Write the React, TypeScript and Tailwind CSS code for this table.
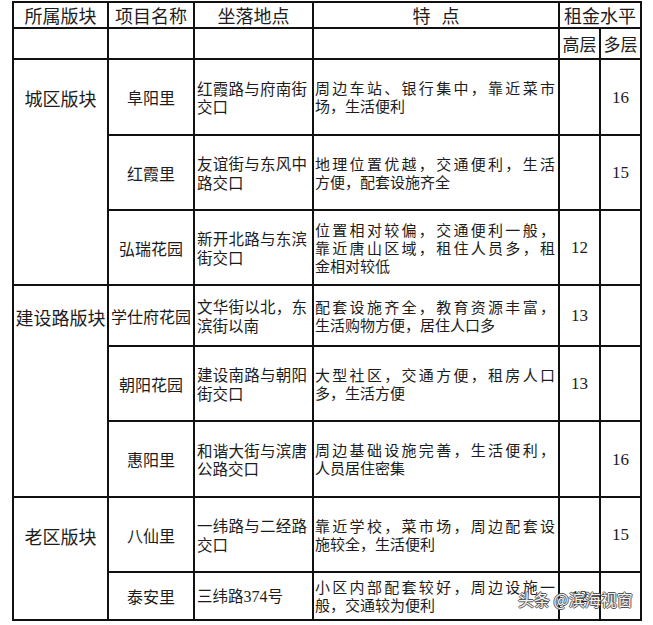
import React from "react";

type Row = {
  group?: string;
  groupEnd?: boolean;
  name: string;
  addr: React.ReactNode[];
  feat: string[];
  high?: string;
  multi?: string;
};

const serif = "font-['Liberation_Serif',serif]";

const rows: Row[] = [
  {
    group: "城区版块",
    name: "阜阳里",
    addr: ["红霞路与府南街", "交口"],
    feat: ["周边车站、银行集中，靠近菜市", "场，生活便利"],
    multi: "16",
  },
  {
    name: "红霞里",
    addr: ["友谊街与东风中", "路交口"],
    feat: ["地理位置优越，交通便利，生活", "方便，配套设施齐全"],
    multi: "15",
  },
  {
    name: "弘瑞花园",
    groupEnd: true,
    addr: ["新开北路与东滨", "街交口"],
    feat: ["位置相对较偏，交通便利一般，", "靠近唐山区域，租住人员多，租", "金相对较低"],
    high: "12",
  },
  {
    group: "建设路版块",
    name: "学仕府花园",
    addr: ["文华街以北，东", "滨街以南"],
    feat: ["配套设施齐全，教育资源丰富，", "生活购物方便，居住人口多"],
    high: "13",
  },
  {
    name: "朝阳花园",
    addr: ["建设南路与朝阳", "街交口"],
    feat: ["大型社区，交通方便，租房人口", "多，生活方便"],
    high: "13",
  },
  {
    name: "惠阳里",
    groupEnd: true,
    addr: ["和谐大街与滨唐", "公路交口"],
    feat: ["周边基础设施完善，生活便利，", "人员居住密集"],
    multi: "16",
  },
  {
    group: "老区版块",
    name: "八仙里",
    addr: ["一纬路与二经路", "交口"],
    feat: ["靠近学校，菜市场，周边配套设", "施较全，生活便利"],
    multi: "15",
  },
  {
    name: "泰安里",
    groupEnd: true,
    addr: [
      <>
        三纬路<span className={`${serif} text-[16px]`}>374</span>号
      </>,
    ],
    feat: ["小区内部配套较好，周边设施一", "般，交通较为便利"],
    high: "12",
  },
];

const cell = "border-r-2 border-b-2 border-[#111]";

const Lines = ({ lines }: { lines: React.ReactNode[] }) => (
  <div className="w-full">
    {lines.map((l, i) => (
      <div
        key={i}
        className={i < lines.length - 1 ? "text-justify [text-align-last:justify]" : ""}
      >
        {l}
      </div>
    ))}
  </div>
);

export default function App() {
  return (
    <div className="relative w-[653px] h-[625px] overflow-hidden bg-white text-[#1c1c1c] font-['Noto_Sans_CJK_SC','Noto_Sans',sans-serif]">
      <div className="ml-[12px] mt-[1px] w-fit grid grid-cols-[95px_86px_119px_246px_41px_41px] grid-rows-[26px_31px_76px_75px_75px_61px_75px_76px_75px_48px] border-l-2 border-t-2 border-[#111]">
        {/* header */}
        <div className={`${cell} flex items-center justify-center text-[18px] leading-none`}>所属版块</div>
        <div className={`${cell} flex items-center justify-center text-[18px] leading-none`}>项目名称</div>
        <div className={`${cell} flex items-center justify-center text-[18px] leading-none`}>坐落地点</div>
        <div className={`${cell} flex items-center justify-center gap-[11px] text-[18px] leading-none`}>
          <span>特</span>
          <span>点</span>
        </div>
        <div className={`${cell} col-span-2 flex items-center justify-center text-[18px] leading-none`}>租金水平</div>

        <div className={cell} />
        <div className={cell} />
        <div className={cell} />
        <div className={cell} />
        <div className={`${cell} flex items-center justify-center text-[17px] leading-none`}>高层</div>
        <div className={`${cell} flex items-center justify-center text-[17px] leading-none`}>多层</div>

        {rows.map((r, i) => (
          <React.Fragment key={i}>
            <div
              className={`border-r-2 border-[#111] ${r.groupEnd ? "border-b-2" : ""} flex items-center justify-center text-[18px] leading-none whitespace-nowrap`}
            >
              {r.group}
            </div>
            <div className={`${cell} flex items-center justify-center text-[16px] leading-none whitespace-nowrap`}>
              {r.name}
            </div>
            <div className={`${cell} flex items-center pl-[2px] pr-[5px] text-[15.5px] leading-[18.5px]`}>
              <Lines lines={r.addr} />
            </div>
            <div className={`${cell} flex items-center pl-[1px] pr-[3px] text-[15px] leading-[18px]`}>
              <Lines lines={r.feat} />
            </div>
            <div className={`${cell} ${serif} flex items-center justify-center text-[17px] leading-none`}>
              {r.high}
            </div>
            <div className={`${cell} ${serif} flex items-center justify-center text-[17px] leading-none`}>
              {r.multi}
            </div>
          </React.Fragment>
        ))}
      </div>

      {/* watermark */}
      <div className="absolute left-[518px] top-[591px] text-[16px] leading-none text-[#f4f4f4] whitespace-nowrap [text-shadow:-1px_0_#555,1px_0_#555,0_-1px_#555,0_1px_#555]">
        头条 @滨海视窗
      </div>
    </div>
  );
}
